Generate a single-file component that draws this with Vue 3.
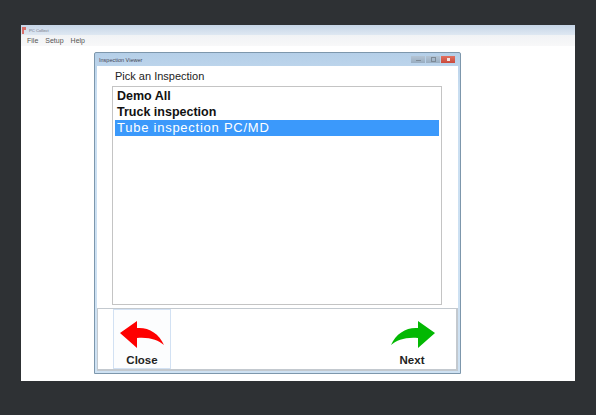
<template>
  <div class="screen">
    <div class="app-window">
      <div class="app-title">
        <svg class="app-icon" width="5" height="7" viewBox="0 0 5 7"><path d="M0 0h4v3H2v4H0z" fill="#d9706a" /></svg>
        <span>PC Collect</span>
      </div>
      <div class="menu-bar">
        <span v-for="item in menus" :key="item">{{ item }}</span>
      </div>
      <div class="app-body">
        <div class="dialog">
          <div class="dialog-title">
            <span>Inspection Viewer</span>
            <div class="win-buttons">
              <i class="win-btn"><b class="glyph-min"></b></i>
              <i class="win-btn"><b class="glyph-max"></b></i>
              <i class="win-btn close-btn"><b class="glyph-close"></b></i>
            </div>
          </div>
          <div class="dialog-inner">
            <div class="pick-label">Pick an Inspection</div>
            <ul class="list">
              <li
                v-for="(row, i) in inspections"
                :key="row"
                :class="{ selected: i === 2 }"
              >{{ row }}</li>
            </ul>
            <div class="actions">
              <button class="action close-action">
                <svg width="45" height="28" viewBox="0 0 45 28">
                  <path d="M0 12 L17 0 L17 7 C28 6 39 12 44 24 C38 19 30 16 17 17 L17 27 Z" fill="#fe0000" />
                </svg>
                <span>Close</span>
              </button>
              <button class="action next-action">
                <svg width="45" height="28" viewBox="0 0 45 28">
                  <path d="M45 12 L28 0 L28 7 C17 6 6 12 1 24 C7 19 15 16 28 17 L28 27 Z" fill="#03b803" />
                </svg>
                <span>Next</span>
              </button>
            </div>
          </div>
        </div>
      </div>
    </div>
  </div>
</template>

<script setup>
const menus = ['File', 'Setup', 'Help']
const inspections = ['Demo All', 'Truck inspection', 'Tube inspection PC/MD']
</script>

<style>
html, body {
  margin: 0;
  background: #2e3134;
}
</style>

<style scoped>
.screen {
  width: 596px;
  height: 415px;
  box-sizing: border-box;
  padding: 25px 21px 34px 21px;
  background: #2e3134;
  font-family: "Liberation Sans", Arial, sans-serif;
  overflow: hidden;
}

.app-window {
  height: 100%;
  background: #fff;
  display: flex;
  flex-direction: column;
}

.app-title {
  height: 10px;
  background: linear-gradient(#c6d5e7, #dfe8f2);
  display: flex;
  align-items: center;
  gap: 2px;
  padding-left: 1px;
  font-size: 4.2px;
  color: #778;
}

.menu-bar {
  height: 11px;
  background: linear-gradient(#f1f3f5, #f8f8f9);
  display: flex;
  align-items: center;
  gap: 7px;
  padding-left: 6px;
  font-size: 7px;
  color: #555;
}

.app-body {
  flex: 1;
  padding: 6px 0 7px 73px;
}

.dialog {
  width: 367px;
  height: 100%;
  box-sizing: border-box;
  background: linear-gradient(#b5cfe8, #c9def1 12%, #cfe2f3);
  border: 1px solid #7d97ac;
  border-radius: 2px 2px 0 0;
  padding: 0 2px 2px 2px;
  display: flex;
  flex-direction: column;
}

.dialog-title {
  height: 13px;
  display: flex;
  align-items: center;
  justify-content: space-between;
  font-size: 5.5px;
  color: #445;
  padding: 0 3px 0 2px;
  flex-shrink: 0;
}

.win-buttons {
  display: flex;
  gap: 1px;
}

.win-btn {
  width: 14px;
  height: 7px;
  background: linear-gradient(#b4c4d4, #98adc1);
  display: flex;
  align-items: center;
  justify-content: center;
}

.close-btn {
  background: linear-gradient(#e07060, #c94a3c);
}

.glyph-min {
  width: 5px;
  height: 1px;
  background: #7d8a96;
  margin-top: 2px;
}

.glyph-max {
  width: 3px;
  height: 3px;
  border: 1px solid #7d8a96;
}

.glyph-close {
  width: 3px;
  height: 3px;
  background: #f3e3e0;
}

.dialog-inner {
  flex: 1;
  background: #fff;
  display: flex;
  flex-direction: column;
  min-height: 0;
}

.pick-label {
  font-size: 11px;
  color: #222;
  padding: 4px 0 0 18px;
  height: 17px;
  box-sizing: border-box;
  margin-bottom: 3px;
  flex-shrink: 0;
}

.list {
  list-style: none;
  margin: 0 0 3px 15px;
  padding: 1px 2px;
  width: 330px;
  height: 219px;
  box-sizing: border-box;
  border: 1px solid #c4c4c4;
  flex-shrink: 0;
}

.list li {
  height: 16px;
  line-height: 16px;
  padding-left: 2px;
  font-size: 12.5px;
  font-weight: bold;
  color: #111;
}

.list li.selected {
  background: #3b99fb;
  color: #fff;
  font-weight: normal;
  font-size: 13px;
  letter-spacing: 0.75px;
}

.actions {
  height: 63px;
  box-sizing: border-box;
  border: 1px solid #c3c9cf;
  border-right-width: 2px;
  border-bottom-width: 2px;
  display: flex;
  justify-content: space-between;
  padding: 0 15px 0 15px;
  width: 361px;
}

.action {
  width: 58px;
  height: 60px;
  background: #fff;
  border: 1px solid transparent;
  padding: 11px 0 0 0;
  font-family: inherit;
  font-size: 11.5px;
  font-weight: bold;
  color: #222;
  display: flex;
  flex-direction: column;
  align-items: center;
  gap: 5px;
}

.close-action {
  border-color: #d2e1f3;
  background: #fcfdfe;
}
</style>
